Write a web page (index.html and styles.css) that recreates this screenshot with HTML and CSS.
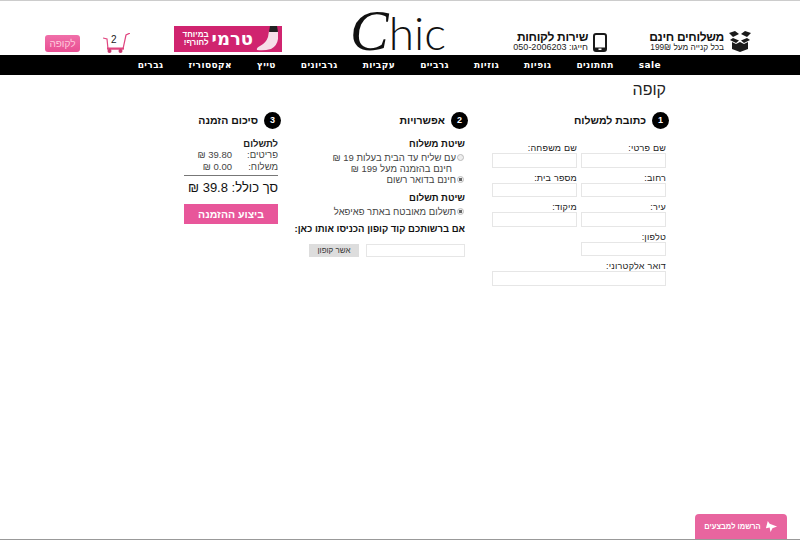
FILE: index.html
```html
<!DOCTYPE html>
<html lang="he" dir="rtl">
<head>
    <meta charset="UTF-8">
    <title>קופה</title>
    <link rel="stylesheet" href="styles.css">
</head>
<body>
    <header class="top">
        <div class="promo">
            <svg width="22" height="21" viewBox="0 0 22 21">
                <path d="M0 2 6 0 10 3 4 6ZM22 2 16 0 12 3 18 6ZM1 9 4 7 10 9.500 7 12ZM21 9 18 7 12 9.500 15 12Z" fill="#1a1a1a"/>
                <path d="M3 11 7 13 11 11 15 13 19 11V18L11 21 3 18Z" fill="#1a1a1a"/>
            </svg>
            <div class="promo-text">
                <div class="promo-title">משלוחים חינם</div>
                <div class="promo-sub">בכל קנייה מעל 199₪</div>
            </div>
        </div>
        <div class="promo service">
            <svg width="14" height="19" viewBox="0 0 14 19">
                <rect x="1" y="1" width="12" height="17" rx="2" fill="#fff" stroke="#1a1a1a" stroke-width="2"/>
                <rect x="1" y="14.500" width="12" height="3.500" fill="#1a1a1a"/>
                <rect x="5.500" y="15.500" width="3" height="1.500" fill="#fff"/>
            </svg>
            <div class="promo-text">
                <div class="promo-title">שירות לקוחות</div>
                <div class="promo-sub">חייגו: <span dir="ltr">050-2006203</span></div>
            </div>
        </div>
        <div class="logo" dir="ltr"><span class="logo-c">C</span>hic</div>
        <div class="banner">
            <svg width="26" height="26" viewBox="0 0 26 26">
                <path d="M15 5 24 5 24 13Q23 20 17 23 10 25 3 24 2 22 6 20 12 17 14 11Z" fill="#f6dfe9"/>
                <path d="M16 0 23 0 24 6 15 6Z" fill="#222"/>
            </svg>
            <span class="banner-big">טרמי</span>
            <span class="banner-small">במיוחד<br>לחורף!</span>
        </div>
        <div class="cart">
            <svg width="27" height="20" viewBox="0 0 27 20">
                <path d="M0 5 4 6 5 16H20L23 2 27 0" fill="none" stroke="#e0457f" stroke-width="1.200"/>
                <rect x="4" y="14.500" width="17" height="2" fill="#e0457f"/>
                <circle cx="6.500" cy="18" r="2" fill="#c93a70"/>
                <circle cx="17.500" cy="18" r="2" fill="#c93a70"/>
            </svg>
            <span class="cart-count">2</span>
        </div>
        <a class="to-checkout" href="#">לקופה</a>
    </header>

    <nav class="menu">
        <a href="#">sale</a>
        <a href="#">תחתונים</a>
        <a href="#">גופיות</a>
        <a href="#">גוזיות</a>
        <a href="#">גרביים</a>
        <a href="#">עקביות</a>
        <a href="#">גרביונים</a>
        <a href="#">טייץ</a>
        <a href="#">אקססוריז</a>
        <a href="#">גברים</a>
    </nav>

    <main class="page">
        <h1>קופה</h1>
        <div class="columns">
            <section class="col col-address">
                <h2><span class="num">1</span>כתובת למשלוח</h2>
                <div class="fields">
                    <label>שם פרטי:<input type="text"></label>
                    <label>שם משפחה:<input type="text"></label>
                    <label>רחוב:<input type="text"></label>
                    <label>מספר בית:<input type="text"></label>
                    <label>עיר:<input type="text"></label>
                    <label>מיקוד:<input type="text"></label>
                    <label class="phone">טלפון:<input type="text"></label>
                    <label class="wide">דואר אלקטרוני:<input type="text"></label>
                </div>
            </section>

            <section class="col col-options">
                <h2><span class="num">2</span>אפשרויות</h2>
                <h3>שיטת משלוח</h3>
                <div class="radio-row"><span class="radio"></span><span>עם שליח עד הבית בעלות 19 ₪<br><span class="indent">חינם בהזמנה מעל 199 ₪</span></span></div>
                <div class="radio-row"><span class="radio on"></span><span>חינם בדואר רשום</span></div>
                <h3>שיטת תשלום</h3>
                <div class="radio-row"><span class="radio on"></span><span>תשלום מאובטח באתר פאיפאל</span></div>
                <h3 class="coupon-title">אם ברשותכם קוד קופון הכניסו אותו כאן:</h3>
                <div class="coupon">
                    <input type="text">
                    <button type="button">אשר קופון</button>
                </div>
            </section>

            <section class="col col-summary">
                <h2><span class="num">3</span>סיכום הזמנה</h2>
                <div class="pay-title">לתשלום</div>
                <div class="sum-row"><span class="sum-label">פריטים:</span><span>39.80 ₪</span></div>
                <div class="sum-row"><span class="sum-label">משלוח:</span><span>0.00 ₪</span></div>
                <div class="total">סך כולל: 39.8 ₪</div>
                <button type="button" class="order">ביצוע ההזמנה</button>
            </section>
        </div>
    </main>

    <a class="newsletter" href="#">
        <svg width="13" height="13" viewBox="0 0 14 14"><path d="M3 1 5 4 13 7 8 9 6 13 5 8 1 9Z" fill="#fff"/></svg>
        הרשמו למבצעים
    </a>
</body>
</html>
```

FILE: styles.css
```css
html, body {
    height: 100%;
}

body {
    margin: 0;
    padding: 0;
    background-color: #fff;
    color: #222;
    font-family: "Liberation Sans", "DejaVu Sans", sans-serif;
    font-size: 11px;
    overflow: hidden;
    position: relative;
    border-top: 1px solid #ccc;
    border-bottom: 1px solid #999;
    box-sizing: border-box;
}

.top {
    height: 54px;
    display: flex;
    align-items: flex-end;
    padding-right: 49px;
    box-sizing: border-box;
}

.promo {
    display: flex;
    align-items: center;
    gap: 5px;
    width: 144px;
    flex: none;
    padding-bottom: 3px;
}

.service {
    width: 157px;
}

.promo-title {
    font-size: 12px;
    font-weight: bold;
    letter-spacing: -0.3px;
    line-height: 11px;
    color: #111;
}

.promo-sub {
    font-size: 8.300px;
    line-height: 9px;
}

.service .promo-sub {
    font-size: 9px;
}

/* the logo: a slanted serif C, then the rest upright */
.logo {
    width: 100px;
    height: 42px;
    flex: none;
    font-family: Lato, sans-serif;
    font-weight: 300;
    font-size: 46px;
    line-height: 36px;
    color: #111;
    white-space: nowrap;
}

.logo-c {
    font-family: "Liberation Serif", serif;
    font-size: 58px;
    font-style: italic;
}

.banner {
    width: 108px;
    height: 26px;
    flex: none;
    margin-right: 68px;
    margin-bottom: 3px;
    padding-right: 2px;
    box-sizing: border-box;
    background-color: #d0246f;
    color: #fff;
    display: flex;
    align-items: center;
    gap: 1px;
    font-weight: bold;
}

.banner-big {
    font-size: 18px;
    line-height: 26px;
    font-family: "DejaVu Sans", sans-serif;
}

.banner-small {
    font-size: 8px;
    line-height: 8px;
    margin-right: 2px;
}

.cart {
    position: relative;
    width: 27px;
    height: 20px;
    flex: none;
    margin-right: 44px;
    margin-bottom: 2px;
}

.cart-count {
    position: absolute;
    top: 1px;
    left: 8px;
    font-size: 10px;
    line-height: 12px;
    color: #222;
}

.to-checkout {
    margin-right: 23px;
    margin-bottom: 3px;
    width: 35px;
    height: 17px;
    flex: none;
    line-height: 17px;
    text-align: center;
    background: linear-gradient(#f06fa9, #e94f93);
    border-radius: 3px;
    color: #fcd;
    font-size: 10px;
    text-decoration: none;
}

.menu {
    height: 20px;
    background-color: #000;
    display: flex;
    padding-right: 139px;
    gap: 25px;
    align-items: center;
}

.menu a {
    color: #fff;
    font-family: "DejaVu Sans", sans-serif;
    font-size: 9px;
    font-weight: bold;
    letter-spacing: 0.4px;
    text-decoration: none;
}

.page {
    padding-right: 134px;
}

h1 {
    margin: 4px 0 0;
    font-size: 16px;
    font-weight: normal;
    line-height: 22px;
}

.columns {
    display: flex;
    margin-top: 10px;
}

.col-address {
    width: 174px;
    margin-left: 27px;
}

.col-options {
    width: 156px;
    margin-left: 31px;
    font-size: 9.500px;
    line-height: 11px;
}

.col-summary {
    width: 94px;
}

h2 {
    margin: 0 -3px 9px 0;
    display: flex;
    align-items: center;
    gap: 6px;
    font-size: 10.500px;
    font-weight: bold;
    height: 18px;
    color: #111;
}

.num {
    width: 17px;
    height: 17px;
    border-radius: 50%;
    background-color: #000;
    color: #fff;
    font-size: 9px;
    text-align: center;
    line-height: 17px;
}

.fields {
    display: grid;
    grid-template-columns: 85px 85px;
    column-gap: 4px;
    padding-top: 5px;
}

.fields label {
    display: block;
    font-size: 9px;
    line-height: 10px;
    letter-spacing: 0.2px;
}

.fields .wide {
    grid-column: 1 / 3;
}

.fields .phone {
    grid-column: 1;
}

.fields input {
    display: block;
    box-sizing: border-box;
    width: 100%;
    height: 14.500px;
    margin: 0 0 5px;
    border: 1px solid #e6e6e6;
    background: #fff;
    padding: 0;
}

h3 {
    margin: 0 0 3px;
    font-size: 9.500px;
    font-weight: bold;
    line-height: 11px;
    white-space: nowrap;
    color: #111;
}

.radio-row {
    display: flex;
    gap: 1px;
    color: #444;
}

.radio {
    flex: none;
    width: 7px;
    height: 7px;
    margin: 2px 1px 0 0;
    border-radius: 50%;
    border: 1px solid #bbb;
    box-sizing: border-box;
    background: #eee;
}

.radio.on {
    background: radial-gradient(circle, #666 0 1.500px, #f2f2f2 2px);
}

.indent {
    padding-right: 4px;
}

.radio-row + h3 {
    margin-top: 7px;
}

.radio-row + .coupon-title {
    margin-top: 6px;
}

.coupon {
    display: flex;
    gap: 7px;
    margin-top: 10px;
}

.coupon input {
    box-sizing: border-box;
    width: 99px;
    height: 13px;
    border: 1px solid #e6e6e6;
    padding: 0;
}

.coupon button {
    width: 50px;
    height: 13px;
    background-color: #ddd;
    border: none;
    font-family: inherit;
    font-size: 8px;
    padding: 0;
    color: #333;
}

.pay-title {
    font-size: 9.500px;
    line-height: 11px;
    font-weight: bold;
}

.sum-row {
    display: flex;
    font-size: 9.500px;
    line-height: 12px;
    color: #444;
}

.sum-label {
    width: 46px;
}

.total {
    border-top: 1px solid #777;
    margin-top: 2px;
    padding-top: 4px;
    font-size: 13px;
    line-height: 15px;
    color: #111;
}

.order {
    display: block;
    width: 94px;
    height: 20px;
    margin-top: 9px;
    background-color: #e8569a;
    color: #fff;
    border: none;
    font-family: inherit;
    font-size: 10.500px;
    font-weight: bold;
    padding: 0;
}

.newsletter {
    position: absolute;
    left: 695px;
    bottom: 0;
    width: 92px;
    height: 25px;
    background-color: #e8659f;
    color: #fff;
    border-radius: 4px 4px 0 0;
    font-size: 7.500px;
    font-weight: bold;
    text-decoration: none;
    display: flex;
    align-items: center;
    justify-content: center;
    gap: 4px;
}

/* white tab that breaks the bottom line under the button */
.newsletter::after {
    content: "";
    position: absolute;
    top: 100%;
    left: 13px;
    width: 59px;
    height: 1px;
    background-color: #fff;
}
```
